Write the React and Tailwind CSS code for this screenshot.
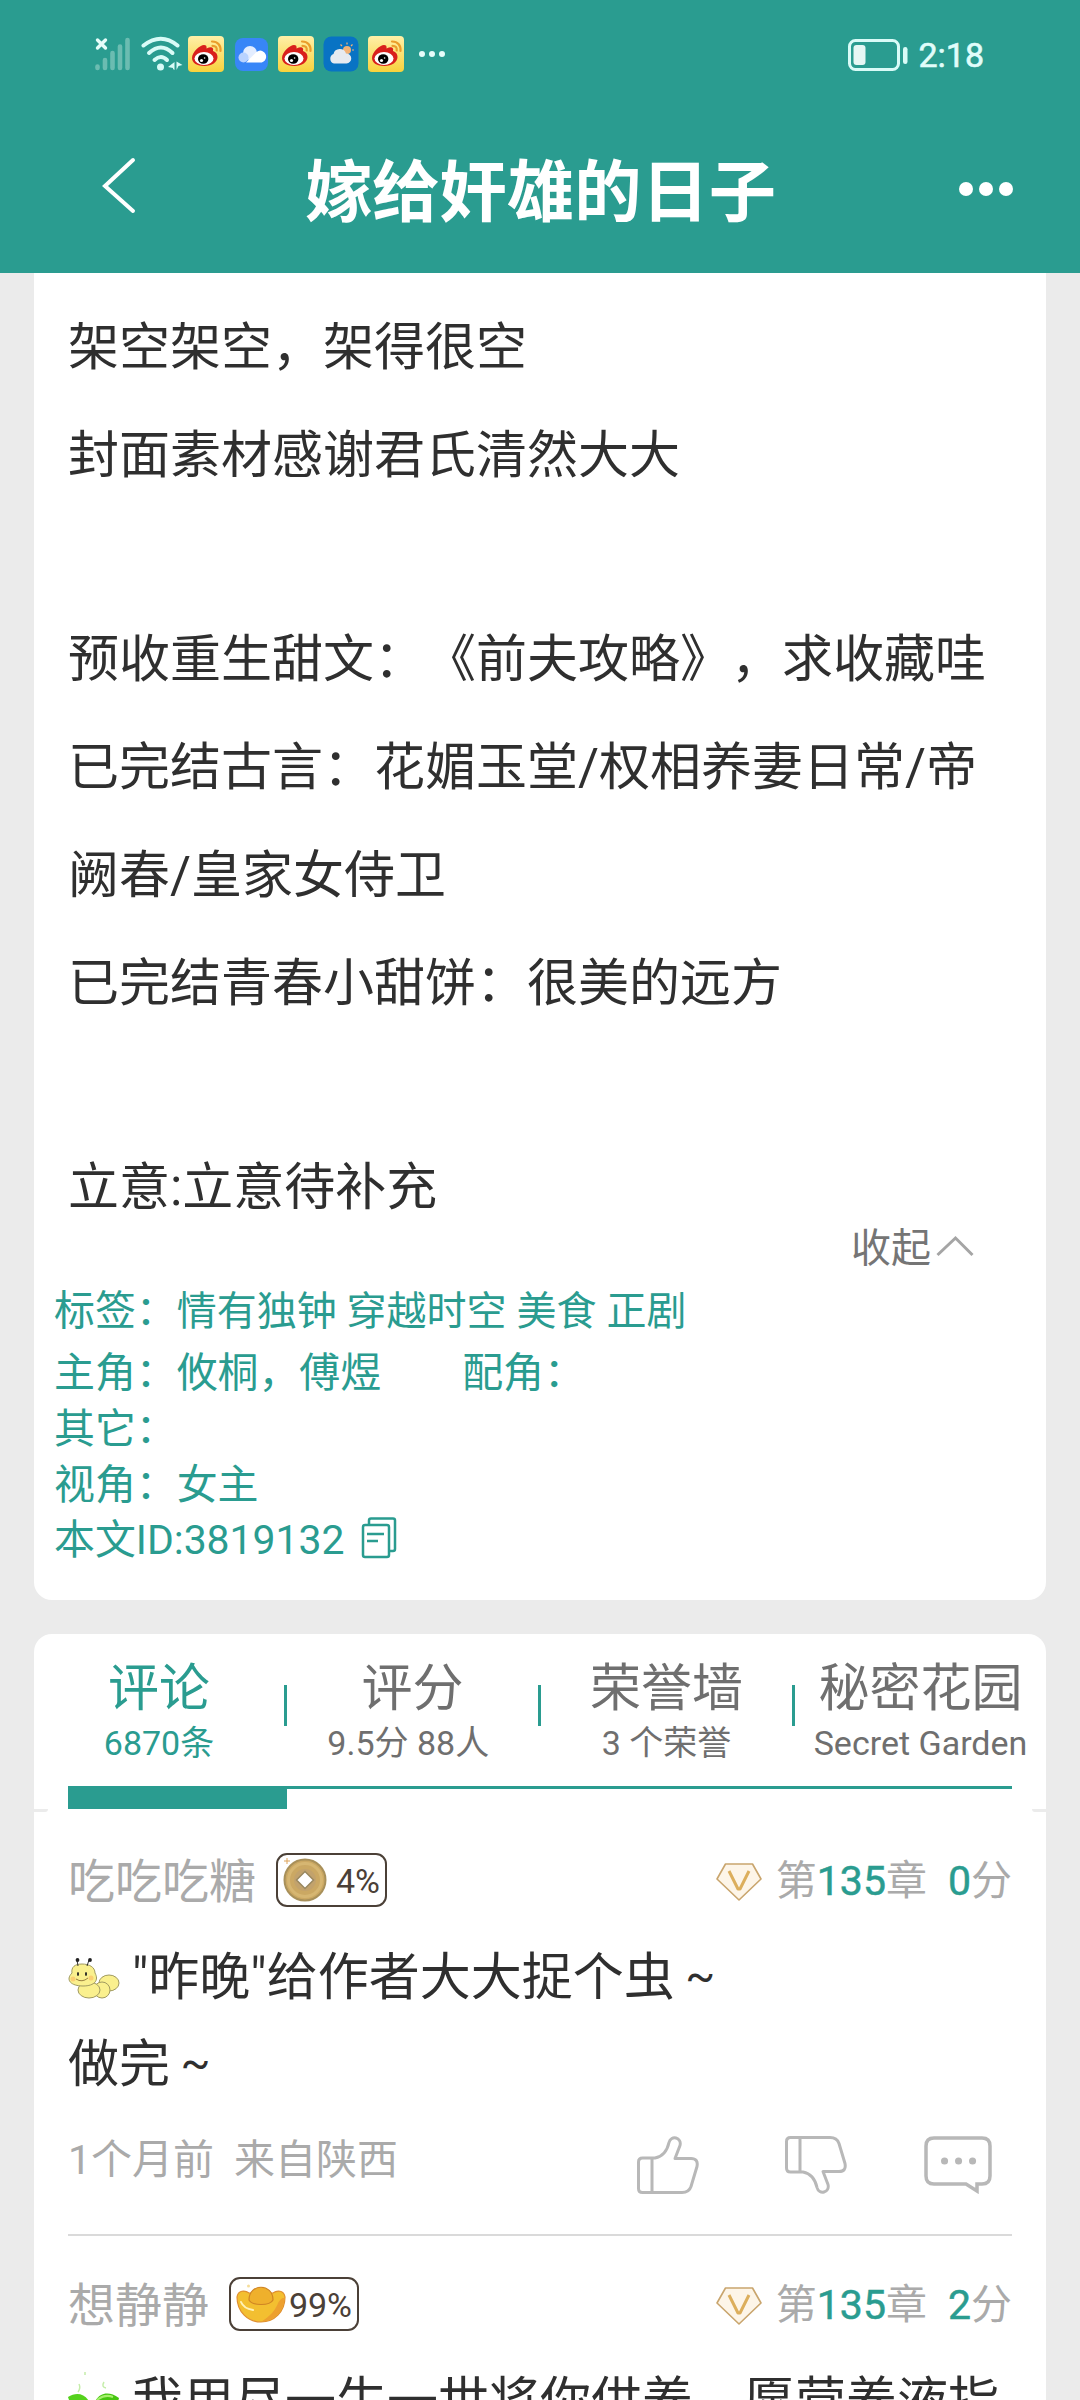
function SignalIcon() {
    return (
        <svg width="36" height="36" viewBox="0 0 36 36" fill="none" strokeLinecap="round">
            <path d="M2.500 4l8 8M10.500 4l-8 8" stroke="#e6fdfa" strokeWidth="3.400" />
            <path d="M2.500 30.500v1.500M10 24v8M17.500 17v15M25 10.500v21.500M32.500 4v28" stroke="#6bbcb1" strokeWidth="4.600" />
        </svg>
    );
}

function WifiIcon() {
    return (
        <svg width="42" height="36" viewBox="0 0 42 36" fill="none" stroke="#d9fbf7" strokeLinecap="round">
            <path d="M2.500 9.500Q20 -4 36.500 9.500" strokeWidth="4" />
            <path d="M8 17Q20 6 31.500 17" strokeWidth="4" />
            <path d="M13.500 24Q20 18 26 24" strokeWidth="4" />
            <circle cx="19.500" cy="31" r="3.500" fill="#d9fbf7" stroke="none" />
            <path d="M33.500 26v8l-1.500-1v-1l-5-1zM35.500 25.500v8.500l2-4 4-1z" fill="#d9fbf7" stroke="none" />
        </svg>
    );
}

function WeiboIcon() {
    return (
        <svg width="36" height="36" viewBox="0 0 36 36">
            <defs>
                <linearGradient id="weiboBg" x1="0" y1="0" x2="0" y2="1">
                    <stop offset="0" stopColor="#fff0a8" />
                    <stop offset="1" stopColor="#f8d23c" />
                </linearGradient>
            </defs>
            <rect width="36" height="36" rx="4" fill="url(#weiboBg)" />
            <path d="M4 22c0-6 8-13 12-13 2 0 3 1 2.500 3.500C23 10.500 26 11 25 15c3 1 4.500 3 4.500 6 0 5-5.500 9-13 9S4 27 4 22z" fill="#d9201c" />
            <ellipse cx="16" cy="22.500" rx="9.500" ry="6.500" fill="#fff" />
            <ellipse cx="15.200" cy="23" rx="5.200" ry="4.800" fill="#000" />
            <circle cx="13.500" cy="24.500" r="1.600" fill="#fff" />
            <circle cx="16.600" cy="22" r=".8" fill="#fff" />
            <path d="M24 5.500c6 0 9 4 8.500 9.500M24.500 9.800c3.200 0 4.600 1.800 4.200 4.700" fill="none" stroke="#ea9d2b" strokeWidth="2.200" strokeLinecap="round" />
        </svg>
    );
}

function CloudIcon() {
    return (
        <svg width="36" height="36" viewBox="0 0 36 36">
            <rect x="2" y="2" width="33" height="33" rx="8" fill="#3886f7" />
            <circle cx="17" cy="17" r="7" fill="#e3edff" />
            <circle cx="10.500" cy="21.500" r="5" fill="#b9d3ff" />
            <path d="M13 26.500l9-9a6 6 0 1 1 4 9z" fill="#fff" />
        </svg>
    );
}

function WeatherIcon() {
    return (
        <svg width="36" height="36" viewBox="0 0 36 36">
            <rect x=".5" y=".5" width="35" height="35" rx="8" fill="#0873c4" />
            <circle cx="24" cy="14" r="4" fill="#f2b277" />
            <path d="M24 8.500v-2M19 10l-1.500-1.500M28 10l1.500-1.500M29 14h2" stroke="#f2b277" strokeWidth="1.200" />
            <path d="M11 27.500a5 5 0 0 1-.5-9.500 6.500 6.500 0 0 1 12.500-.5 5 5 0 0 1 .5 10z" fill="#e6eaf0" />
        </svg>
    );
}

function StatusBar() {
    return (
        <div className="flex h-[108px] items-center pl-[95px] pr-[96px]">
            <SignalIcon />
            <div className="ml-[10px] flex"><WifiIcon /></div>
            <div className="ml-[5px] flex gap-[9px]">
                <WeiboIcon />
                <CloudIcon />
                <WeiboIcon />
                <WeatherIcon />
                <WeiboIcon />
            </div>
            <div className="ml-[15px] flex gap-1">
                <span className="size-[6px] rounded-full bg-[#e6fdfa]" />
                <span className="size-[6px] rounded-full bg-[#e6fdfa]" />
                <span className="size-[6px] rounded-full bg-[#e6fdfa]" />
            </div>
            <svg className="mt-px ml-auto" width="62" height="34" viewBox="0 0 62 34">
                <rect x="2.500" y="2.500" width="49" height="29" rx="6" fill="none" stroke="#d9fbf7" strokeWidth="3" />
                <rect x="6.500" y="7" width="12" height="20" rx="3" fill="#e6f7f4" />
                <rect x="56" y="9" width="4.500" height="17" rx="2.200" fill="#d9fbf7" />
            </svg>
            <span className="mt-[2px] ml-[9px] text-[34px] leading-none text-[#e0fdfa] [-webkit-text-stroke:0.6px_#e0fdfa]">2:18</span>
        </div>
    );
}

function TitleBar() {
    return (
        <div className="flex h-[165px] items-start pl-[100px] pr-[67px]">
            <svg className="mt-[48px]" width="38" height="60" viewBox="0 0 38 60" fill="none" stroke="#fff" strokeWidth="4" strokeLinecap="round">
                <path d="M33 4L5 30l28 25" />
            </svg>
            <h1 className="mt-[35px] ml-[167px] text-[67.300px] leading-[100px] font-bold text-white">嫁给奸雄的日子</h1>
            <div className="mt-[74px] ml-auto flex gap-[6px]">
                <span className="size-[14px] rounded-full bg-white" />
                <span className="size-[14px] rounded-full bg-white" />
                <span className="size-[14px] rounded-full bg-white" />
            </div>
        </div>
    );
}

const intro = [
    '架空架空，架得很空',
    '封面素材感谢君氏清然大大',
    '',
    '预收重生甜文：《前夫攻略》，求收藏哇',
    '已完结古言：花媚玉堂/权相养妻日常/帝阙春/皇家女侍卫',
    '已完结青春小甜饼：很美的远方',
    '',
    '立意:立意待补充',
];

function IntroCard() {
    return (
        <section className="mx-[34px] h-[1327px] rounded-b-[18px] bg-white pt-[21px]">
            <div className="pl-[34px] pr-[30px] text-[51px] leading-[107.700px] text-[#2f2f2f]">
                {intro.map((line, i) => (
                    <p key={i} className={line ? '' : 'h-[97px]'}>{line}</p>
                ))}
            </div>
            <div className="-mt-[20px] flex items-center justify-end pr-[72px] text-[40px] leading-[54px] text-[#757575]">
                收起
                <svg className="mb-[5px] ml-[5px]" width="38" height="22" viewBox="0 0 38 22" fill="none" stroke="#a5a5a5" strokeWidth="3">
                    <path d="M1.500 20L19.500 3l17 17" />
                </svg>
            </div>
            <div className="mt-[7px] pl-[20px] text-[40.900px] leading-[56px] text-[#2a9c90]">
                <p className="mb-[5px]">标签：<span className="text-[40px]">情有独钟 穿越时空 美食 正剧</span></p>
                <p>主角：攸桐，傅煜<span className="ml-[81px]">配角：</span></p>
                <p>其它：</p>
                <p>视角：女主</p>
                <p className="-mt-px flex items-center">
                    本文ID:3819132
                    <svg className="mb-[4px] ml-[16px]" width="38" height="42" viewBox="0 0 38 42" fill="none" stroke="#2a9c90" strokeWidth="2.500" strokeLinejoin="round">
                        <rect x="2" y="8" width="26" height="32" rx="2" />
                        <path d="M8 8V3.500q0-2 2-2h22q2 0 2 2V32q0 2-2 2h-4M6 17h17M6 24h11" />
                    </svg>
                </p>
            </div>
        </section>
    );
}

const tabs = [
    { title: '评论', sub: '6870条' },
    { title: '评分', sub: '9.5分 88人 ' },
    { title: '荣誉墙', sub: '3 个荣誉' },
    { title: '秘密花园', sub: 'Secret Garden' },
];

function Tabs() {
    return (
        <div className="h-[175px] rounded-t-[18px] bg-white">
            <div className="flex h-[152px]">
                {tabs.map((tab, i) => (
                    <div key={tab.title} className={i === 0 ? 'flex w-[250px] text-[#2a9c90]' : 'flex w-[254px] text-[#6f6f6f]'}>
                        {i > 0 && <span className="mt-[51px] h-[41px] w-[3px] shrink-0 bg-[#2a9c90]" />}
                        <div className="flex grow flex-col items-center pt-[17px] whitespace-pre">
                            <span className="text-[51px] leading-[76px]">{tab.title}</span>
                            <span className="-mt-[4px] text-[34px] leading-[40px]">{tab.sub}</span>
                        </div>
                    </div>
                ))}
            </div>
            <div className="mx-[34px] border-t-[3px] border-[#2a9c90]">
                <div className="h-[20px] w-[219px] bg-[#2a9c90]" />
            </div>
        </div>
    );
}

function CoinIcon() {
    return (
        <svg width="44" height="48" viewBox="0 0 44 48">
            <circle cx="22" cy="24" r="20.500" fill="#cba863" stroke="#a8905a" strokeWidth="2" />
            <circle cx="22" cy="24" r="16.500" fill="none" stroke="#d6b672" strokeWidth="3" />
            <circle cx="22" cy="24" r="11" fill="#c2a26c" />
            <path d="M22 15.500l8.500 8.500-8.500 8.500-8.500-8.500z" fill="#fff" stroke="#998860" strokeWidth="1.500" />
            <path d="M4 2v6M1 5h6" stroke="#dda45a" strokeWidth="1" />
        </svg>
    );
}

function IngotIcon() {
    return (
        <svg width="50" height="40" viewBox="0 0 50 40">
            <path d="M1 13C2 6 9 6 13 9h24c4-3 11-3 12 4 0 15-11 25-24 25S1 28 1 13z" fill="#f3bf30" stroke="#e08f31" strokeWidth="1.200" />
            <path d="M48.500 15c-1 12-10 22-23 22.500 9-6 12-9 16-17 2-5 6-8 7-5.500z" fill="#eda02f" />
            <path d="M13 16C13 -1 37 -1 37 16c-3 6-21 6-24 0z" fill="#efb02c" stroke="#cf8424" strokeWidth="1.200" />
            <path d="M5 18c2 5 6 7 12 8" fill="none" stroke="#fff2b8" strokeWidth="2" strokeLinecap="round" />
            <circle cx="12.500" cy="2" r="1.500" fill="#f5dd9a" />
        </svg>
    );
}

function VipIcon() {
    return (
        <svg width="46" height="38" viewBox="0 0 46 38" strokeLinejoin="round">
            <path d="M9.500 1h27L45 16 23 37 1 16z" fill="#fdf5e8" stroke="#c9a56d" strokeWidth="1.600" />
            <path d="M13 8l9 18h2l9-18" fill="none" stroke="#dcae5c" strokeWidth="3" />
        </svg>
    );
}

function WormIcon() {
    return (
        <svg width="52" height="42" viewBox="0 0 52 42" fill="#faf08e" stroke="#a09a60" strokeWidth="1">
            <ellipse cx="41" cy="26" rx="10" ry="8" />
            <circle cx="34" cy="33" r="8" />
            <ellipse cx="21" cy="33" rx="11" ry="8" />
            <path d="M4 16c-1-6 3-9 10-9s13 3 13 9c4 7 0 13-12 13S-3 23 4 16z" />
            <path d="M10 9L9 3M19 9l2-6" stroke="#333" />
            <g fill="#222" stroke="none">
                <circle cx="9.500" cy="3" r="1.900" />
                <circle cx="22" cy="3" r="1.900" />
                <ellipse cx="10" cy="17" rx="1" ry="2" />
                <ellipse cx="18" cy="17" rx="1" ry="2" />
            </g>
            <path d="M8 22q6 4 12-1" fill="none" stroke="#9a8040" />
            <circle cx="5" cy="22" r="2.500" fill="#fbcf72" stroke="none" />
            <circle cx="23" cy="21" r="2.500" fill="#fbcf72" stroke="none" />
        </svg>
    );
}

function LeafIcon() {
    return (
        <svg width="52" height="56" viewBox="0 0 52 56">
            <path d="M0 31c8-5 17-4 22 6v17C12 54 4 44 0 31z" fill="#55d21c" />
            <path d="M25 46c0-16 12-24 26-14-3 12-13 22-26 22z" fill="#46c510" />
            <path d="M29 34c5-4 11-5 16-3" fill="none" stroke="#a5f06c" strokeWidth="2" />
            <path d="M11 18q2 4-1 8M36 16q-3 5 2 6M17 6v3" fill="none" stroke="#c5eda9" strokeWidth="1.500" />
        </svg>
    );
}

function CommentHead({ name, icon, percent, badgeWidth, score }) {
    return (
        <div className="flex h-[57px] items-center text-[#aaa]">
            <span className="text-[47px] leading-[57px]">{name}</span>
            <span className={`mb-[3px] ml-[20px] flex h-[54px] items-center justify-between rounded-[11px] border-2 border-[#4b4037] pl-[5px] pr-[5px] text-[34px] leading-none text-[#4b4037] ${badgeWidth}`}>
                {icon}
                <span className="mt-[2px]">{percent}</span>
            </span>
            <span className="ml-auto flex items-center text-[41px] leading-[57px]">
                <VipIcon />
                <span className="ml-[14px]">第</span>
                <span className="text-[#2a9c90] [-webkit-text-stroke:0.5px_#2a9c90]">135</span>章
                <span className="ml-[21px] text-[#2a9c90] [-webkit-text-stroke:0.5px_#2a9c90]">{score}</span>分
            </span>
        </div>
    );
}

function Tilde() {
    return <span className="inline-block w-[51px] text-center align-[4px] text-[44px] leading-none">~</span>;
}

function Actions() {
    return (
        <div className="mr-[20px] ml-auto flex">
            <svg width="62" height="58" viewBox="0 0 62 58" fill="none" stroke="#b8b8b8" strokeWidth="3" strokeLinejoin="round">
                <path d="M15 22H5.500q-4 0-4 4v26.500q0 4 4 4H45q7 0 9-6l6-20q1.500-8-6-8H38l5-13c2-8-9-11-11-3-2 9-6 14-14 15.500zM15 22v34.500" />
            </svg>
            <svg className="ml-[86px]" width="62" height="58" viewBox="0 0 62 58" fill="none" stroke="#b8b8b8" strokeWidth="3" strokeLinejoin="round">
                <path d="M15 36H5.500q-4 0-4-4V5.500q0-4 4-4H45q7 0 9 6l6 20q1.500 8-6 8H38l5 13c2 8-9 11-11 3-2-9-6-14-14-15.500zM15 36V1.500" />
            </svg>
            <svg className="ml-[77px]" width="68" height="58" viewBox="0 0 68 58" fill="none" stroke="#b8b8b8" strokeWidth="3.500">
                <path d="M10 2h48q8 0 8 8v30q0 8-8 8h-5v7l-11-7H10q-8 0-8-8V10q0-8 8-8z" />
                <path d="M20.500 25h.1M34.500 25h.1M48.500 25h.1" strokeWidth="7" strokeLinecap="round" />
            </svg>
        </div>
    );
}

function Comments() {
    return (
        <div className="h-[591px] bg-white">
            <div className="flex h-[3px] justify-between">
                <span className="w-[14px] rounded-br-full bg-[#ebebeb]" />
                <span className="w-[14px] rounded-bl-full bg-[#ebebeb]" />
            </div>
            <div className="px-[34px] pt-[41px]">
                <CommentHead name="吃吃吃糖" icon={<CoinIcon />} percent="4%" badgeWidth="w-[111px]" score="0" />
                <div className="mt-[24px] text-[51px] leading-[87px] text-[#2f2f2f]">
                    <p className="flex h-[87px] items-center">
                        <span className="mr-[12px]"><WormIcon /></span>
                        <span>"昨晚"给作者大大捉个虫<Tilde /></span>
                    </p>
                    <p className="h-[87px]">做完<Tilde /></p>
                </div>
                <div className="mt-[28px] flex h-[58px] items-center text-[41px] leading-[46px] text-[#aaa]">
                    <span className="mb-[10px]">1个月前</span>
                    <span className="mb-[10px] ml-[20px]">来自陕西</span>
                    <Actions />
                </div>
                <div className="mt-[40px] mb-[41px] h-[2px] bg-[#dadada]" />
                <CommentHead name="想静静" icon={<IngotIcon />} percent="99%" badgeWidth="w-[130px]" score="2" />
                <p className="mt-[24px] flex h-[66px] items-start text-[51px] leading-[87px] whitespace-nowrap text-[#2f2f2f]">
                    <span className="mt-[8px] mr-[12px]"><LeafIcon /></span>我用尽一生一世将你供养，愿营养液指
                </p>
            </div>
        </div>
    );
}

export default function App() {
    return (
        <div className={'h-[2400px] w-[1080px] overflow-hidden bg-[#ebebeb] font-[Roboto,"Noto_Sans_CJK_SC",sans-serif] [text-spacing-trim:space-all]'}>
            <header className="h-[273px] bg-[#2a9c90]">
                <StatusBar />
                <TitleBar />
            </header>
            <IntroCard />
            <section className="mx-[34px] mt-[34px]">
                <Tabs />
                <Comments />
            </section>
        </div>
    );
}
